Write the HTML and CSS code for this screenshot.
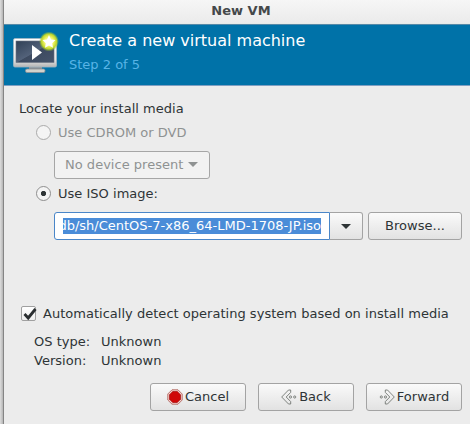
FILE: index.html
```html
<!DOCTYPE html>
<html lang="en">
<head>
<meta charset="utf-8">
<title>New VM</title>
<link rel="stylesheet" href="styles.css">
</head>
<body>
<main class="window">
  <div class="titlebar">New VM</div>
  <header class="banner">
    <svg class="vm-icon" width="48" height="48" viewBox="0 0 48 48">
      <defs>
        <linearGradient id="frame" x1="0" y1="0" x2="0" y2="1"><stop offset="0" stop-color="#fff"/><stop offset=".75" stop-color="#e4e4e4"/><stop offset="1" stop-color="#b4b4b4"/></linearGradient>
        <linearGradient id="screen" x1="0" y1="0" x2="1" y2="1"><stop offset="0" stop-color="#304056"/><stop offset=".5" stop-color="#53627a"/><stop offset=".52" stop-color="#3d4a60"/><stop offset="1" stop-color="#46546b"/></linearGradient>
        <radialGradient id="glow"><stop offset="0" stop-color="#fffff0"/><stop offset=".45" stop-color="#f2f56a"/><stop offset=".75" stop-color="#bfd62c"/><stop offset="1" stop-color="#8fc030" stop-opacity="0"/></radialGradient>
      </defs>
      <path d="M18 35h13v4H18z" fill="#8a8f94"/>
      <rect x="14.500" y="38" width="19.500" height="3.500" rx="1.500" fill="#d2d2cc" stroke="#8b9196" stroke-width=".8"/>
      <rect x="2.500" y="7.500" width="43" height="28.500" rx="1.500" fill="url(#frame)" stroke="#a2b6c3" stroke-width=".8"/>
      <rect x="5" y="10" width="38" height="21.500" fill="url(#screen)" stroke="#6b7482" stroke-width=".6"/>
      <path d="M21 14v15l10-7.500z" fill="#fff"/>
      <circle cx="38" cy="10.500" r="10" fill="url(#glow)"/>
      <path d="M38 4l2 4.500 4.500.5-3.300 3.200.8 4.600-4-2.300-4 2.300.8-4.600L31.500 9l4.500-.5z" fill="#fff"/>
    </svg>
    <div class="banner-text">
      <h1 class="banner-title">Create a new virtual machine</h1>
      <div class="banner-step">Step 2 of 5</div>
    </div>
  </header>
  <section class="content">
    <div class="heading">Locate your install media</div>
    <div class="option option-cdrom disabled"><span class="radio"></span><span>Use CDROM or DVD</span></div>
    <div class="combo disabled"><span>No device present</span><span class="arrow"></span></div>
    <div class="option option-iso"><span class="radio checked"></span><span>Use ISO image:</span></div>
    <div class="iso-row">
      <div class="entry"><div class="selection"><span>db/sh/CentOS-7-x86_64-LMD-1708-JP.iso</span></div></div>
      <div class="drop"><span class="arrow"></span></div>
      <div class="button browse">Browse...</div>
    </div>
    <div class="detect">
      <span class="checkbox"><svg width="17" height="17" viewBox="0 0 17 17"><path d="M3.500 8l3.700 4L14.500 3" fill="none" stroke="#2a2e30" stroke-width="2.800"/></svg></span>
      <span>Automatically detect operating system based on install media</span>
    </div>
    <dl class="os">
      <dt>OS type:</dt><dd>Unknown</dd>
      <dt>Version:</dt><dd>Unknown</dd>
    </dl>
  </section>
  <footer class="actions">
    <div class="button action">
      <svg width="16" height="16" viewBox="0 0 16 16"><path d="M5 .8h6L15.200 5v6L11 15.200H5L.8 11V5z" fill="#f3d3cf" stroke="#a9544c" stroke-width=".8"/><path d="M5.700 2.500h4.600l3.200 3.200v4.600l-3.200 3.200H5.700l-3.200-3.200V5.700z" fill="#cf0808" stroke="#900" stroke-width=".6"/></svg>
      <span>Cancel</span>
    </div>
    <div class="button action">
      <svg width="16" height="16" viewBox="0 0 16 16" fill="none" stroke="#737773" stroke-width=".9"><path d="M.7 8L7.500 1h2.200v2.400L5.200 8l4.500 4.600V15H7.500z"/><circle cx="9.500" cy="8" r="1.100"/><circle cx="13.700" cy="8" r="1.100"/></svg>
      <span>Back</span>
    </div>
    <div class="button action">
      <svg width="16" height="16" viewBox="0 0 16 16" fill="none" stroke="#737773" stroke-width=".9"><path d="M15.300 8L8.500 1H6.300v2.400L10.800 8l-4.500 4.600V15h2.200z"/><circle cx="6.500" cy="8" r="1.100"/><circle cx="2.300" cy="8" r="1.100"/></svg>
      <span>Forward</span>
    </div>
  </footer>
</main>
</body>
</html>
```
FILE: styles.css
```css
* { box-sizing: border-box; }
body {
  margin: 0;
  height: 424px;
  padding-left: 3px;
  overflow: hidden;
  background: linear-gradient(to right, #dedede, #b5b5b5 3px);
  font: 13px/19px "DejaVu Sans", sans-serif;
  letter-spacing: .02px;
  color: #2e3436;
  white-space: nowrap;
}
.window { height: 424px; background: #ececec; border-left: 1px solid #858585; }
.titlebar {
  height: 24px;
  padding-left: 8px;
  background: linear-gradient(#f6f6f6, #ebebeb);
  border-bottom: 1px solid #e6ebe8;
  text-align: center;
  font-weight: bold;
  line-height: 21px;
  color: #45484a;
}
.banner {
  display: flex;
  height: 62px;
  padding: 0 8px 0 7px;
  background: #0072a8;
  border-top: 1px solid #5689a8;
  border-bottom: 1px solid #7f9fc2;
  color: #fff;
}
.vm-icon { margin-top: 6px; flex: none; }
.banner-text { padding: 6px 0 0 10px; }
.banner-title { margin: 0; font-size: 16px; line-height: 20px; font-weight: normal; letter-spacing: 0; }
.banner-step { margin-top: 4px; color: #58b4e6; letter-spacing: 0; }
.content { height: 297px; padding: 13px 8px 0 15px; }
.heading { height: 19px; }
.option { display: flex; align-items: center; gap: 7px; height: 19px; margin-left: 17px; }
.option-cdrom { margin-top: 5px; }
.option-iso { margin-top: 5px; }
.disabled { color: #8f9292; }
.radio {
  width: 15px;
  height: 15px;
  border: 1px solid #aaa;
  border-radius: 50%;
  background: #f4f4f4;
}
.radio.checked {
  border-color: #8f8f8f;
  background: radial-gradient(circle, #2e3436 2.200px, #f4f4f4 3px);
}
.combo {
  display: flex;
  align-items: center;
  justify-content: space-between;
  width: 156px;
  height: 28px;
  margin: 9px 0 0 35px;
  padding: 0 11px 1px 10px;
  border: 1px solid #a6a6a6;
  border-radius: 3px;
  background: #f2f2f2;
}
.arrow { border: 5px solid transparent; border-top-color: currentColor; border-bottom: 0; }
.iso-row { display: flex; height: 28px; margin: 9px 0 0 35px; }
.entry {
  width: 276px;
  padding: 5px 8px;
  border: 1px solid #4a86c8;
  border-radius: 3px 0 0 3px;
  background: #fff;
}
.selection { display: flex; justify-content: flex-end; height: 16px; line-height: 16px; background: #4a8cd8; color: #fff; letter-spacing: 0; overflow: hidden; }
.drop, .button {
  display: flex;
  align-items: center;
  justify-content: center;
  border: 1px solid #a3a3a3;
  border-radius: 3px;
  background: linear-gradient(#fafafa, #e2e2e2);
}
.drop { width: 33px; border-left: 0; border-radius: 0 3px 3px 0; }
.browse { width: 94px; margin-left: 5px; padding-bottom: 1px; }
.detect { display: flex; align-items: center; height: 19px; margin-top: 64px; gap: 6px; }
.checkbox { width: 15px; height: 15px; margin-left: 2px; margin-right: 1px; border: 1px solid #a0a0a0; border-radius: 2px; background: linear-gradient(#fff, #eee); }
.checkbox svg { display: block; margin: -1px; }
.os { display: grid; grid-template-columns: 67px auto; grid-auto-rows: 19px; margin: 9px 0 0 15px; }
.os dd { margin: 0; }
.actions { display: flex; justify-content: flex-end; gap: 12px; padding-right: 8px; }
.action { width: 96px; height: 28px; gap: 2px; padding-bottom: 1px; }
```
